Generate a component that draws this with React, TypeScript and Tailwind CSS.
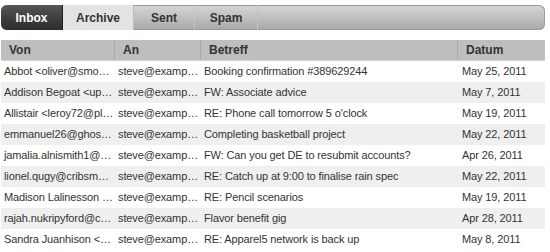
const tabs = ['Inbox', 'Archive', 'Sent', 'Spam'];

const rows = [
  ['Abbot <oliver@smo…', 'steve@examp…', 'Booking confirmation #389629244', 'May 25, 2011'],
  ['Addison Begoat <up…', 'steve@examp…', 'FW: Associate advice', 'May 7, 2011'],
  ['Allistair <leroy72@pl…', 'steve@examp…', "RE: Phone call tomorrow 5 o'clock", 'May 19, 2011'],
  ['emmanuel26@ghos…', 'steve@examp…', 'Completing basketball project', 'May 22, 2011'],
  ['jamalia.alnismith1@…', 'steve@examp…', 'FW: Can you get DE to resubmit accounts?', 'Apr 26, 2011'],
  ['lionel.qugy@cribsm…', 'steve@examp…', 'RE: Catch up at 9:00 to finalise rain spec', 'May 22, 2011'],
  ['Madison Lalinesson …', 'steve@examp…', 'RE: Pencil scenarios', 'May 19, 2011'],
  ['rajah.nukripyford@c…', 'steve@examp…', 'Flavor benefit gig', 'Apr 28, 2011'],
  ['Sandra Juanhison <…', 'steve@examp…', 'RE: Apparel5 network is back up', 'May 8, 2011'],
];

const cols = ['w-[114px]', 'w-[86px]', 'w-[257px]', 'flex-1'];

export default function App() {
  return (
    <div className="w-[550px] h-[252px] bg-white overflow-hidden font-['Liberation_Sans',Arial,sans-serif] text-[11px] text-[#333]">
      <div className="pt-[5px] pl-[1px] pr-[5px]">
        <div className="flex h-[25px] rounded-[6px] bg-gradient-to-b from-[#d6d6d6] to-[#a9a9a9] shadow-[inset_0_0_0_1px_#9a9a9a] text-[12px]">
          {tabs.map((t, i) => (
            <div
              key={t}
              className={
                i === 0
                  ? 'w-[62px] flex items-center justify-center rounded-l-[6px] bg-gradient-to-b from-[#555] to-[#2c2c2c] text-white font-bold border-r border-[#222]'
                  : i === 1
                  ? 'w-[71px] flex items-center justify-center bg-[#e3e3e3] text-[#333] font-bold border-r border-[#bdbdbd]'
                  : i === 2
                  ? 'w-[61px] flex items-center justify-center text-[#333] font-bold border-r border-[#c4c4c4]'
                  : 'w-[63px] flex items-center justify-center text-[#333] font-bold border-r border-[#c4c4c4]'
              }
            >
              {t}
            </div>
          ))}
        </div>
      </div>
      <div className="mt-[10px] ml-[1px] mr-[5px]">
        <div className="flex h-[21px] bg-[#bebebe] font-bold text-[12px] text-[#333] border-b border-[#d4d4d4]">
          {['Von', 'An', 'Betreff', 'Datum'].map((h, i) => (
            <div key={h} className={`${cols[i]} flex items-center pl-[8px] ${i < 3 ? 'border-r border-[#a9a9a9]' : ''}`}>
              {h}
            </div>
          ))}
        </div>
        {rows.map((r, ri) => (
          <div key={ri} className={`flex h-[21px] tracking-[-0.12px] ${ri % 2 === 1 ? 'bg-[#efefef]' : 'bg-white'}`}>
            {r.map((c, ci) => (
              <div key={ci} className={`${cols[ci]} leading-[21px] ${ci === 3 ? 'pl-[4px]' : 'pl-[3px]'} whitespace-nowrap overflow-hidden text-ellipsis`}>
                {c}
              </div>
            ))}
          </div>
        ))}
      </div>
    </div>
  );
}
